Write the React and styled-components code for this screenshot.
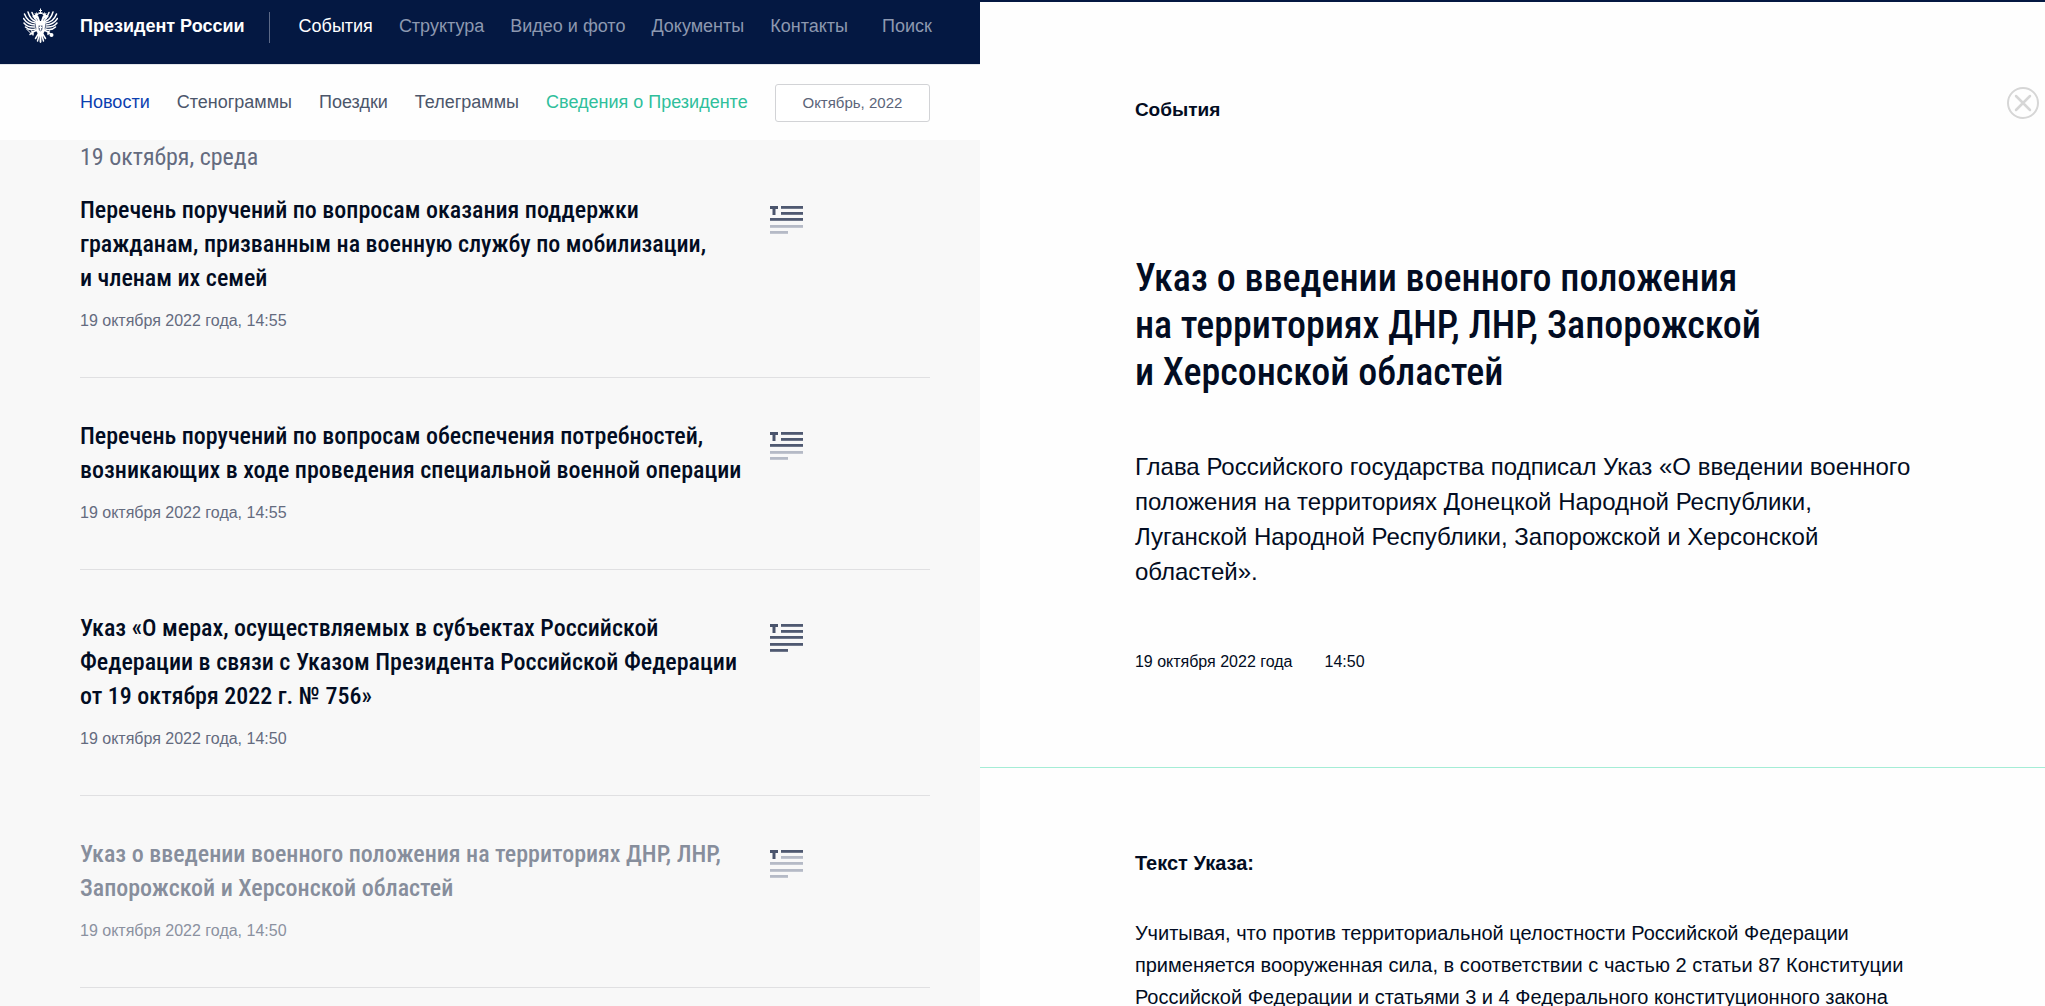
import styled, { createGlobalStyle, css } from "styled-components";

const sans = `"Liberation Sans", Arial, sans-serif`;
const narrow = `"Roboto Condensed", "Liberation Sans Narrow", "Arial Narrow", sans-serif`;

const GlobalStyle = createGlobalStyle`
  * {
    box-sizing: border-box;
  }
  body {
    margin: 0;
    font-family: ${sans};
    color: #020c22;
    background-color: #fefefe;
  }
  h1, h2, h3, p, ul {
    margin: 0;
    padding: 0;
  }
  a {
    color: inherit;
    text-decoration: none;
  }
`;

const Page = styled.div`
  display: grid;
  grid-template-columns: 92fr 100fr;
  height: 100vh;
  overflow: hidden;
`;

const Feed = styled.div`
  min-width: 0;
  background-color: #f8f8f8;
  overflow: hidden;
`;

const Header = styled.header`
  height: 64px;
  padding: 8px 48px 0 23px;
  display: flex;
  align-items: flex-start;
  background-color: #041842;
  color: #fff;
  font-size: 18px;
  line-height: 36px;
  white-space: nowrap;
`;

const Emblem = styled.svg`
  width: 35px;
  height: 35px;
  margin-right: 22px;
  flex-shrink: 0;
`;

const Brand = styled.a`
  font-weight: bold;
`;

const Divider = styled.span`
  width: 1px;
  height: 31px;
  margin: 4px 29px 0 24px;
  flex-shrink: 0;
  background-color: #5c6987;
`;

const MainNav = styled.nav`
  flex: 1;
  display: flex;
  gap: 26px;

  a {
    color: #8d98b0;
  }
  a[aria-current] {
    color: #fff;
  }
  a:last-child {
    margin-left: auto;
  }
`;

const SubHeader = styled.div`
  height: 76px;
  padding: 0 50px 0 80px;
  display: flex;
  align-items: center;
  background-color: #fefefe;
  border-top: 1px solid #e4e6ea;
`;

const SubNav = styled.nav`
  flex: 1;
  display: flex;
  gap: 27px;
  font-size: 18px;
  white-space: nowrap;
`;

const SubLink = styled.a`
  color: ${(props) => props.$color || "#4c566b"};
`;

const MonthButton = styled.button`
  width: 155px;
  height: 38px;
  border: 1px solid #d2d3d6;
  border-radius: 3px;
  background-color: #fff;
  color: #5b6479;
  font-family: ${sans};
  font-size: 15px;
  cursor: pointer;
`;

const List = styled.main`
  padding: 0 50px 0 80px;
`;

const DayTitle = styled.h2`
  font-family: ${narrow};
  font-weight: normal;
  font-size: 24px;
  line-height: 34px;
  color: #646b7f;
`;

const Item = styled.article`
  display: flex;
  padding: ${(props) => (props.$first ? "19px" : "41px")} 0 46px;
  border-bottom: 1px solid #e0e0e2;
`;

const ItemBody = styled.div`
  width: 690px;
  flex-shrink: 0;
`;

const ItemTitle = styled.h3`
  font-family: ${narrow};
  font-weight: 500;
  font-size: 24px;
  line-height: 34px;
  white-space: nowrap;
  color: ${(props) => (props.$read ? "#878e9c" : "#020c22")};
`;

const ItemDate = styled.time`
  display: block;
  margin-top: 16px;
  font-size: 16px;
  line-height: 20px;
  color: ${(props) => (props.$read ? "#8b91a0" : "#646b7f")};
`;

const TextIcon = styled.svg`
  width: 33px;
  height: 28px;
  margin-top: 13px;
`;

const Article = styled.article`
  min-width: 0;
  border-top: 2px solid #041842;
  overflow: hidden;
`;

const Inset = css`
  padding-left: 155px;
  padding-right: 110px;
`;

const ArticleTop = styled.div`
  padding: 85px 6px 0 155px;
  display: flex;
  justify-content: space-between;
`;

const Section = styled.a`
  padding-top: 11px;
  font-size: 19px;
  font-weight: bold;
  line-height: 24px;
`;

const CloseButton = styled.button`
  width: 32px;
  height: 32px;
  padding: 0;
  border: 0;
  background: none;
  cursor: pointer;

  svg {
    display: block;
  }
`;

const ArticleHead = styled.header`
  ${Inset}
  padding-top: 133px;
  padding-bottom: 95px;
  border-bottom: 1px solid #a5edd6;
`;

const Title = styled.h1`
  font-family: ${narrow};
  font-weight: 500;
  font-size: 38px;
  line-height: 47px;
`;

const Lead = styled.p`
  margin-top: 53px;
  font-size: 24px;
  line-height: 35px;
`;

const Published = styled.p`
  margin-top: 63px;
  display: flex;
  gap: 32px;
  font-size: 16px;
  line-height: 20px;
`;

const ArticleText = styled.div`
  ${Inset}
  padding-top: 83px;
`;

const TextTitle = styled.h2`
  font-size: 20px;
  line-height: 24px;
`;

const Text = styled.p`
  margin-top: 42px;
  font-size: 20px;
  line-height: 32px;
`;

const sections = ["События", "Структура", "Видео и фото", "Документы", "Контакты", "Поиск"];

const subSections = [
  { title: "Новости", color: "#0b3fb0" },
  { title: "Стенограммы" },
  { title: "Поездки" },
  { title: "Телеграммы" },
  { title: "Сведения о Президенте", color: "#2fbf9b" },
];

const news = [
  {
    lines: [
      "Перечень поручений по вопросам оказания поддержки",
      "гражданам, призванным на военную службу по мобилизации,",
      "и членам их семей",
    ],
    date: "19 октября 2022 года, 14:55",
    dark: 3,
  },
  {
    lines: [
      "Перечень поручений по вопросам обеспечения потребностей,",
      "возникающих в ходе проведения специальной военной операции",
    ],
    date: "19 октября 2022 года, 14:55",
    dark: 3,
  },
  {
    lines: [
      "Указ «О мерах, осуществляемых в субъектах Российской",
      "Федерации в связи с Указом Президента Российской Федерации",
      "от 19 октября 2022 г. № 756»",
    ],
    date: "19 октября 2022 года, 14:50",
    dark: 5,
  },
  {
    lines: [
      "Указ о введении военного положения на территориях ДНР, ЛНР,",
      "Запорожской и Херсонской областей",
    ],
    date: "19 октября 2022 года, 14:50",
    dark: 1,
    read: true,
  },
];

const Lines = ({ items }) =>
  items.map((line, i) => (
    <span key={line}>
      {i > 0 && <br />}
      {line}
    </span>
  ));

// length of the text is shown by the number of dark bars
const LengthIcon = ({ dark }) => {
  const bars = [
    [11, 0, 22],
    [11, 6, 22],
    [0, 12, 33],
    [0, 19, 33],
    [0, 25, 18],
  ];
  return (
    <TextIcon viewBox="0 0 33 28" aria-hidden="true">
      <path d="M0 0h8v3H5.500v6h-3V3H0z" fill="#4a546c" />
      {bars.map(([x, y, w], i) => (
        <rect key={y} x={x} y={y} width={w} height="2.800" fill={i < dark ? "#4f5971" : "#b5bac6"} />
      ))}
    </TextIcon>
  );
};

const EagleHalf = () => (
  <g fill="none" stroke="#fff" strokeLinecap="round">
    <path d="M25 30C15 29 7 23 3 12M24 34C14 34 6 29 1 21M24 38C15 39 7 36 2 30M25 42C18 44 10 43 5 38" strokeWidth="3" />
    <path d="M26 27C19 25 13 18 10 8M28 25C23 21 20 15 18 9" strokeWidth="3" />
    <path d="M34 30C31 26 31 22 29 18C28 15 25 15 21 17M29 17L24 21" strokeWidth="4" />
    <path d="M24 11l1 3h5l1-4-3 2-1-3-1 3z" strokeWidth="1" fill="#fff" />
    <path d="M28 44L20 48L14 53M20 48L17 46M20 48L20 53" strokeWidth="3" />
    <path d="M31 51L25 61M33 52L29 66M35 53V68" strokeWidth="3" />
  </g>
);

const Eagle = () => (
  <Emblem viewBox="0 0 70 70" role="img" aria-label="Герб России">
    <EagleHalf />
    <g transform="matrix(-1 0 0 1 70 0)">
      <EagleHalf />
    </g>
    <path d="M25 26h20l-2 21q-3 7-8 9q-5-2-8-9z" fill="#fff" />
    <path d="M31 35h8v7q-1 3-4 5q-3-2-4-5z" fill="#6d7892" />
    <path d="M35 35v10M32 39h6" stroke="#fff" strokeWidth="2" />
    <path d="M31 8l1 4h6l1-4-3 1V6h2V4h-2V1h-2v3h-2v2h2v3z" fill="#fff" />
    <path d="M7 42L20 55" stroke="#fff" strokeWidth="2" />
    <circle cx="57" cy="54" r="4" fill="#fff" />
  </Emblem>
);

const App = () => {
  return (
    <>
      <GlobalStyle />
      <Page>
        <Feed>
          <Header>
            <Eagle />
            <Brand href="#">Президент России</Brand>
            <Divider />
            <MainNav>
              {sections.map((title, i) => (
                <a key={title} href="#" aria-current={i === 0 ? "page" : undefined}>
                  {title}
                </a>
              ))}
            </MainNav>
          </Header>
          <SubHeader>
            <SubNav>
              {subSections.map(({ title, color }) => (
                <SubLink key={title} href="#" $color={color}>
                  {title}
                </SubLink>
              ))}
            </SubNav>
            <MonthButton>Октябрь, 2022</MonthButton>
          </SubHeader>
          <List>
            <DayTitle>19 октября, среда</DayTitle>
            {news.map((item, i) => (
              <Item key={item.lines[0]} $first={i === 0}>
                <ItemBody>
                  <ItemTitle $read={item.read}>
                    <a href="#">
                      <Lines items={item.lines} />
                    </a>
                  </ItemTitle>
                  <ItemDate $read={item.read}>{item.date}</ItemDate>
                </ItemBody>
                <LengthIcon dark={item.dark} />
              </Item>
            ))}
          </List>
        </Feed>

        <Article>
          <ArticleTop>
            <Section href="#">События</Section>
            <CloseButton aria-label="Закрыть">
              <svg width="32" height="32" fill="none" stroke="#d6d6d6" strokeLinecap="round">
                <circle cx="16" cy="16" r="15" strokeWidth="2" />
                <path d="M9 9L23 23M23 9L9 23" strokeWidth="2.500" />
              </svg>
            </CloseButton>
          </ArticleTop>
          <ArticleHead>
            <Title>
              <Lines
                items={[
                  "Указ о введении военного положения",
                  "на территориях ДНР, ЛНР, Запорожской",
                  "и Херсонской областей",
                ]}
              />
            </Title>
            <Lead>
              <Lines
                items={[
                  "Глава Российского государства подписал Указ «О введении военного",
                  "положения на территориях Донецкой Народной Республики,",
                  "Луганской Народной Республики, Запорожской и Херсонской",
                  "областей».",
                ]}
              />
            </Lead>
            <Published>
              <span>19 октября 2022 года</span>
              <span>14:50</span>
            </Published>
          </ArticleHead>
          <ArticleText>
            <TextTitle>Текст Указа:</TextTitle>
            <Text>
              <Lines
                items={[
                  "Учитывая, что против территориальной целостности Российской Федерации",
                  "применяется вооруженная сила, в соответствии с частью 2 статьи 87 Конституции",
                  "Российской Федерации и статьями 3 и 4 Федерального конституционного закона",
                ]}
              />
            </Text>
          </ArticleText>
        </Article>
      </Page>
    </>
  );
};

export default App;
